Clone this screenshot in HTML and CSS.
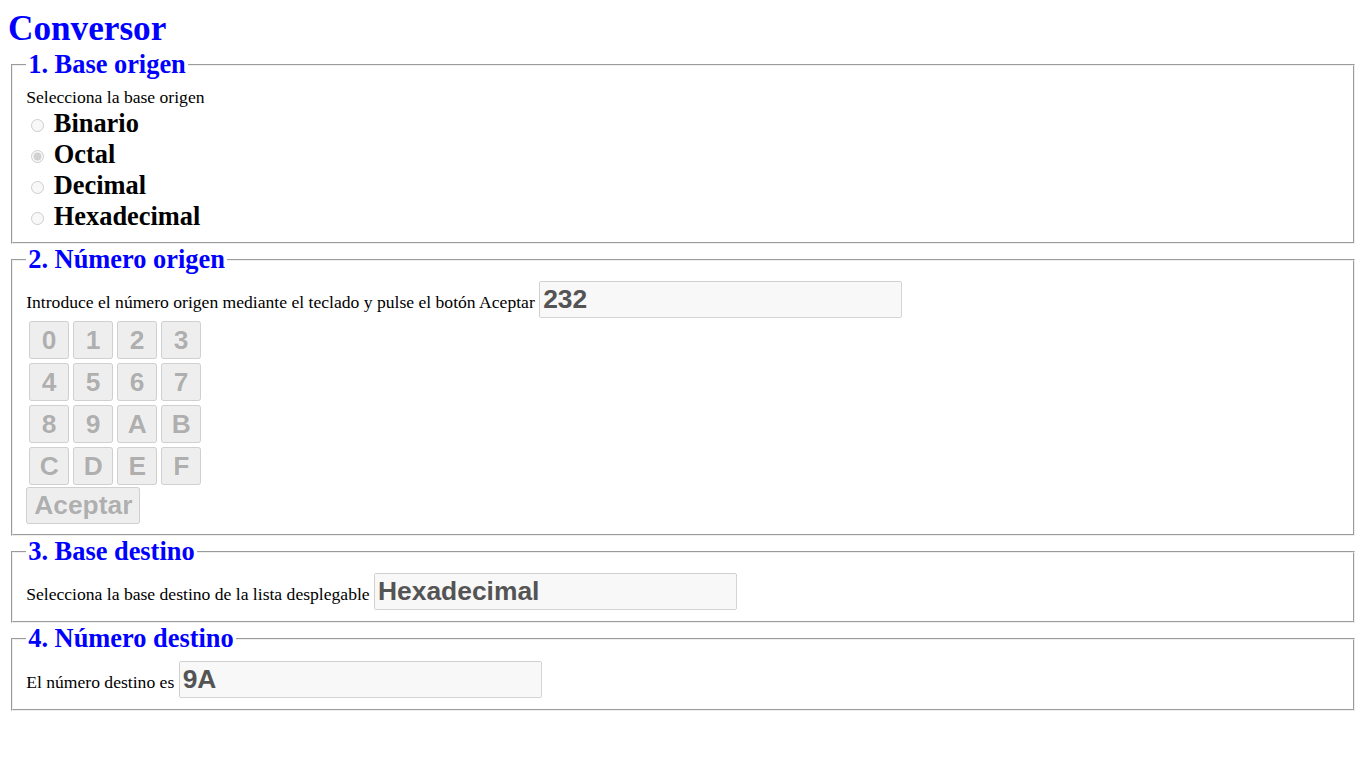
FILE: index.html
```html
<!DOCTYPE html>
<html lang="es">
<head>
<meta charset="utf-8">
<title>Conversor</title>
<link rel="stylesheet" href="styles.css">
</head>
<body>
<h1 class="title">Conversor</h1>
<fieldset class="step step-tight">
  <legend class="step-legend">1. Base origen</legend>
  <div class="hint">Selecciona la base origen</div>
  <div class="option"><label class="opt-label"><input type="radio" name="base" disabled> Binario</label></div>
  <div class="option"><label class="opt-label"><input type="radio" name="base" checked disabled> Octal</label></div>
  <div class="option"><label class="opt-label"><input type="radio" name="base" disabled> Decimal</label></div>
  <div class="option"><label class="opt-label"><input type="radio" name="base" disabled> Hexadecimal</label></div>
</fieldset>
<fieldset class="step step-tight">
  <legend class="step-legend">2. Número origen</legend>
  <div class="line"><span>Introduce el número origen mediante el teclado y pulse el botón Aceptar</span><input class="field" type="text" value="232" disabled></div>
  <table class="keypad">
    <tr><td><button class="key" disabled>0</button></td><td><button class="key" disabled>1</button></td><td><button class="key" disabled>2</button></td><td><button class="key" disabled>3</button></td></tr>
    <tr><td><button class="key" disabled>4</button></td><td><button class="key" disabled>5</button></td><td><button class="key" disabled>6</button></td><td><button class="key" disabled>7</button></td></tr>
    <tr><td><button class="key" disabled>8</button></td><td><button class="key" disabled>9</button></td><td><button class="key" disabled>A</button></td><td><button class="key" disabled>B</button></td></tr>
    <tr><td><button class="key" disabled>C</button></td><td><button class="key" disabled>D</button></td><td><button class="key" disabled>E</button></td><td><button class="key" disabled>F</button></td></tr>
  </table>
  <button class="accept" disabled>Aceptar</button>
</fieldset>
<fieldset class="step">
  <legend class="step-legend">3. Base destino</legend>
  <div class="line"><span>Selecciona la base destino de la lista desplegable</span><input class="field" type="text" value="Hexadecimal" disabled></div>
</fieldset>
<fieldset class="step">
  <legend class="step-legend">4. Número destino</legend>
  <div class="line"><span>El número destino es</span><input class="field" type="text" value="9A" disabled></div>
</fieldset>
</body>
</html>
```

FILE: styles.css
```css
body {
  margin: 8px;
  font-family: "Liberation Serif", "Times New Roman", serif;
  font-size: 17.6px;
  color: #000;
  background: #fff;
}

.title {
  margin: 0;
  font-size: 35.2px;
  line-height: 41px;
  font-weight: bold;
  color: #0000ff;
}

.step {
  margin: 0 3px;
}

.step-tight {
  padding-bottom: 10px;
}

.step-legend {
  font-size: 26.4px;
  font-weight: bold;
  color: #0000ff;
}

.hint {
  line-height: 22px;
}

.option {
  line-height: 31px;
  height: 31px;
}

.opt-label {
  font-size: 26.4px;
  font-weight: bold;
}

.line {
  display: flex;
  align-items: baseline;
  gap: 4.4px;
}

.field {
  box-sizing: border-box;
  width: 363px;
  margin: 0;
  font-family: "Liberation Sans", Arial, sans-serif;
  font-size: 26.4px;
  font-weight: bold;
}

.keypad {
  border-spacing: 2px;
  margin-bottom: -1px;
}

.keypad td {
  padding: 1px;
}

.key,
.accept {
  font-family: "Liberation Sans", Arial, sans-serif;
  font-size: 26.4px;
  font-weight: bold;
}

.key {
  width: 40px;
  height: 38px;
  padding: 0;
}

.accept {
  vertical-align: top;
}
```
